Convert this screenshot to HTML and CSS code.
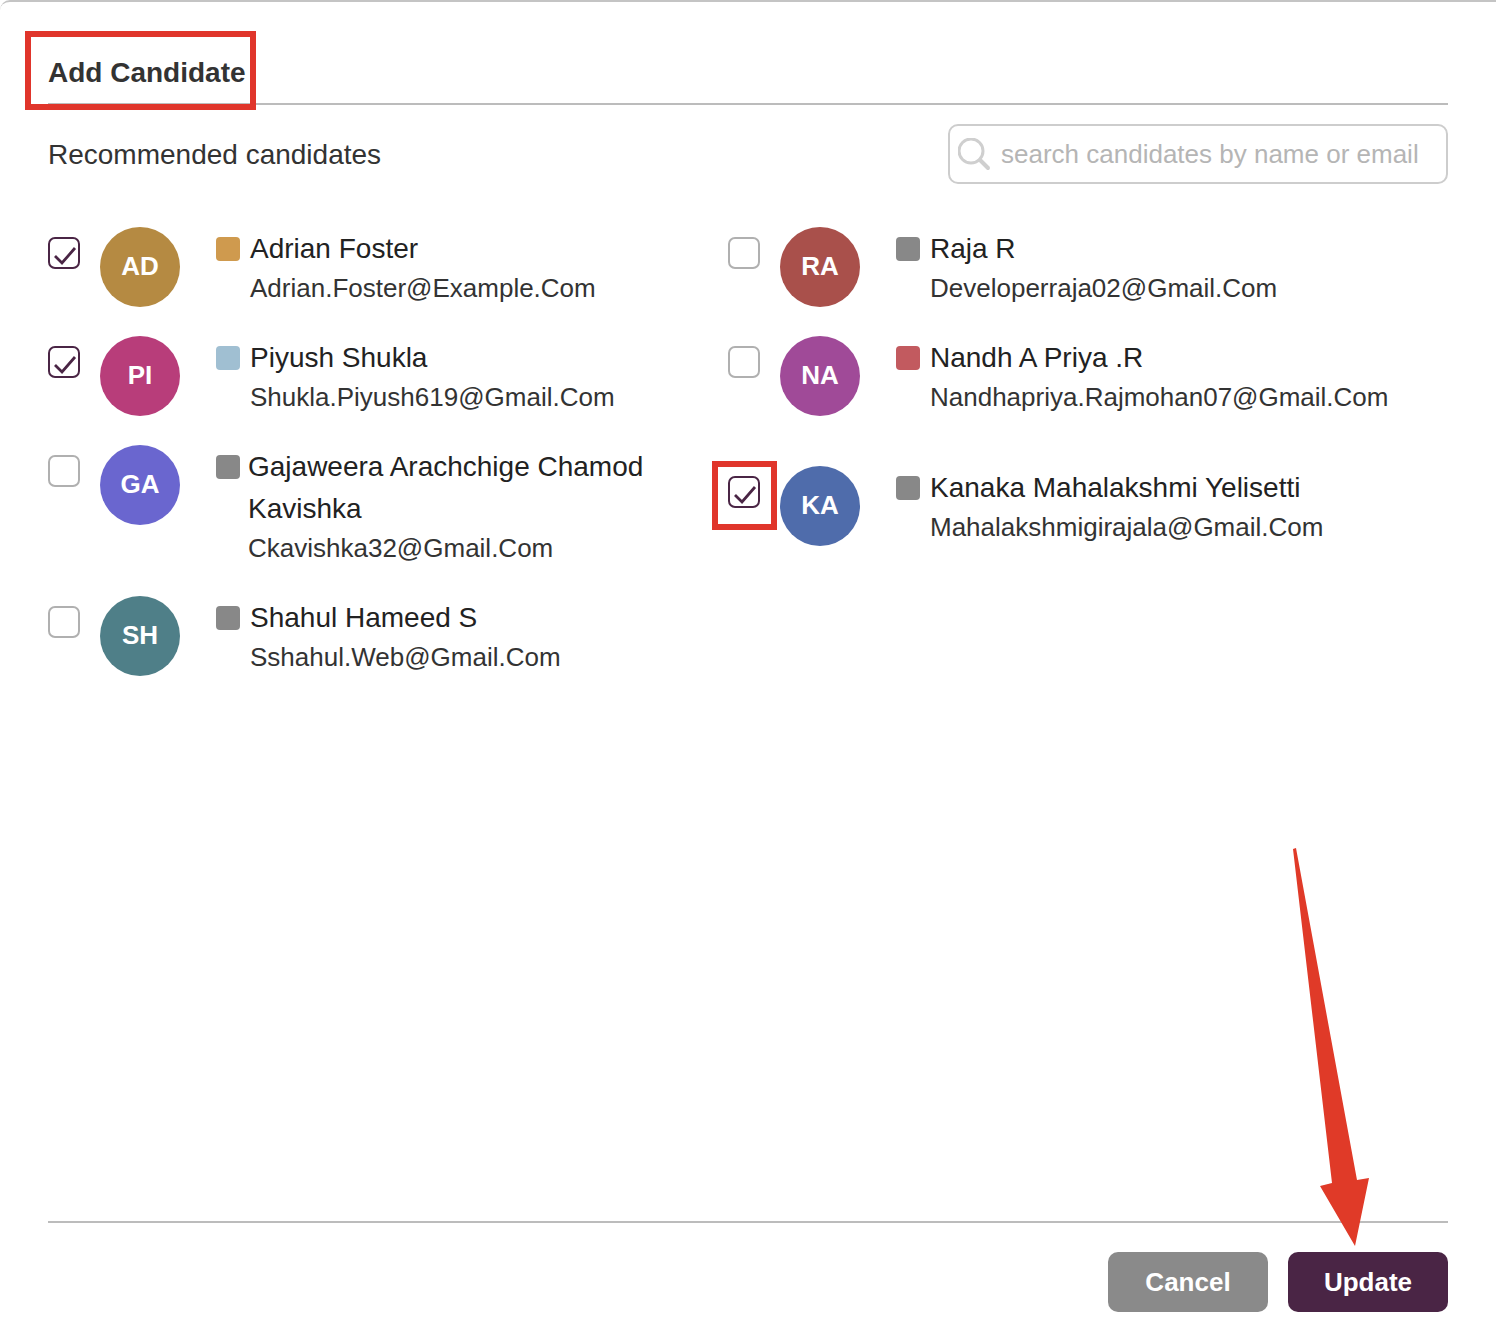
FILE: index.html
```html
<!DOCTYPE html>
<html lang="en">
<head>
<meta charset="utf-8">
<title>Add Candidate</title>
<link rel="stylesheet" href="styles.css">
</head>
<body>
<div class="modal">
  <header class="modal-head"><h1 class="title">Add Candidate</h1></header>
  <div class="toolbar">
    <h2 class="subtitle">Recommended candidates</h2>
    <div class="search">
      <svg class="search-icon" width="34" height="34" viewBox="0 0 34 34"><circle cx="13" cy="13" r="12" fill="none" stroke="#cfcfcf" stroke-width="3"/><path d="M22 22l8 8" stroke="#cfcfcf" stroke-width="4" stroke-linecap="round"/></svg>
      <span class="placeholder">search candidates by name or email</span>
    </div>
  </div>
  <div class="candidates">
    <div class="cand">
      <span class="check on"><svg width="28" height="28" viewBox="0 0 28 28"><path d="M5 17l7 7L25 9" class="tick"/></svg></span>
      <span class="avatar c-ad">AD</span><span class="dot d-ad"></span>
      <div class="info"><div class="name">Adrian Foster</div><div class="email">Adrian.Foster@Example.Com</div></div>
    </div>
    <div class="cand">
      <span class="check"></span>
      <span class="avatar c-ra">RA</span><span class="dot"></span>
      <div class="info"><div class="name">Raja R</div><div class="email">Developerraja02@Gmail.Com</div></div>
    </div>
    <div class="cand">
      <span class="check on"><svg width="28" height="28" viewBox="0 0 28 28"><path d="M5 17l7 7L25 9" class="tick"/></svg></span>
      <span class="avatar c-pi">PI</span><span class="dot d-pi"></span>
      <div class="info"><div class="name">Piyush Shukla</div><div class="email">Shukla.Piyush619@Gmail.Com</div></div>
    </div>
    <div class="cand">
      <span class="check"></span>
      <span class="avatar c-na">NA</span><span class="dot d-na"></span>
      <div class="info"><div class="name">Nandh A Priya .R</div><div class="email">Nandhapriya.Rajmohan07@Gmail.Com</div></div>
    </div>
    <div class="cand">
      <span class="check"></span>
      <span class="avatar c-ga">GA</span><span class="dot"></span>
      <div class="info tight"><div class="name wrap">Gajaweera Arachchige Chamod Kavishka</div><div class="email">Ckavishka32@Gmail.Com</div></div>
    </div>
    <div class="cand">
      <span class="check on"><svg width="28" height="28" viewBox="0 0 28 28"><path d="M5 17l7 7L25 9" class="tick"/></svg></span>
      <span class="avatar c-ka">KA</span><span class="dot"></span>
      <div class="info"><div class="name">Kanaka Mahalakshmi Yelisetti</div><div class="email">Mahalakshmigirajala@Gmail.Com</div></div>
    </div>
    <div class="cand">
      <span class="check"></span>
      <span class="avatar c-sh">SH</span><span class="dot"></span>
      <div class="info"><div class="name">Shahul Hameed S</div><div class="email">Sshahul.Web@Gmail.Com</div></div>
    </div>
  </div>
  <footer class="modal-foot">
    <button class="btn btn-cancel">Cancel</button>
    <button class="btn btn-update">Update</button>
  </footer>
  <div class="mark mark-title"></div>
  <div class="mark mark-check"></div>
  <svg class="arrow" width="1496" height="1328" viewBox="0 0 1496 1328"><polygon points="1293,849 1296,848 1357,1180 1369,1178 1355,1246 1320,1186 1332,1183" fill="#e03a28"/></svg>
</div>
</body>
</html>
```
FILE: styles.css
```css
* { box-sizing: border-box; }
html, body { margin: 0; padding: 0; background: #fff; }
body { font-family: "Liberation Sans", Arial, sans-serif; }
.modal {
  position: relative;
  width: 1496px;
  height: 1328px;
  padding: 0 48px 16px;
  border-top: 2px solid #c4c4c4;
  border-radius: 10px 0 0 0;
  display: flex;
  flex-direction: column;
  overflow: hidden;
}
.modal-head {
  height: 103px;
  border-bottom: 2px solid #bcbcbc;
  display: flex;
  align-items: flex-start;
}
.title { margin: 51px 0 0; font-size: 28px; line-height: 40px; font-weight: 700; color: #333; }
.toolbar {
  display: flex;
  justify-content: space-between;
  align-items: center;
  margin-top: 19px;
  height: 60px;
}
.subtitle { margin: 2px 0 0; font-size: 28px; font-weight: 400; color: #333; }
.search {
  width: 500px;
  height: 60px;
  border: 2px solid #cdcdcd;
  border-radius: 10px;
  display: flex;
  align-items: center;
  padding-left: 8px;
  gap: 9px;
}
.search-icon { flex: none; margin-top: 2px; }
.placeholder { font-size: 26px; color: #b5b5b5; }
.candidates {
  margin-top: 43px;
  display: grid;
  grid-template-columns: 680px 680px;
  row-gap: 29px;
  align-items: center;
}
.cand { display: flex; align-items: flex-start; min-height: 80px; }
.check {
  flex: none;
  width: 32px;
  height: 32px;
  margin-top: 10px;
  border: 2px solid #b0b0b0;
  border-radius: 7px;
  display: flex;
  align-items: center;
  justify-content: center;
}
.check.on { border-color: #4a2545; }
.tick { fill: none; stroke: #4a2545; stroke-width: 2.8; }
.avatar {
  flex: none;
  width: 80px;
  height: 80px;
  margin-left: 20px;
  padding-bottom: 2px;
  border-radius: 50%;
  color: #fff;
  font-size: 26px;
  font-weight: 700;
  display: flex;
  align-items: center;
  justify-content: center;
}
.c-ad { background: #b58a42; }
.c-pi { background: #b83d7a; }
.c-ga { background: #6a66cf; }
.c-sh { background: #4f7f88; }
.c-ra { background: #a9504b; }
.c-na { background: #a04a98; }
.c-ka { background: #4f6cab; }
.dot {
  flex: none;
  width: 24px;
  height: 24px;
  margin: 10px 0 0 36px;
  border-radius: 4px;
  background: #888;
}
.d-ad { background: #cf9a4e; }
.d-pi { background: #a0bfd2; }
.d-na { background: #c25a5f; }
.info { margin: 1px 0 0 10px; }
.info.tight { margin-left: 8px; }
.name { font-size: 28px; line-height: 42px; color: #222; }
.name.wrap { max-width: 410px; }
.email { margin-top: -1px; font-size: 26px; line-height: 38px; color: #333; }
.modal-foot {
  margin-top: auto;
  border-top: 2px solid #bcbcbc;
  padding-top: 29px;
  display: flex;
  justify-content: flex-end;
  gap: 20px;
}
.btn {
  width: 160px;
  height: 60px;
  padding: 0;
  border: 0;
  border-radius: 10px;
  color: #fff;
  font-family: inherit;
  font-size: 26px;
  font-weight: 700;
}
.btn-cancel { background: #8a8a8a; }
.btn-update { background: #4a2545; }
.mark { position: absolute; border: 6px solid #e0352b; }
.mark-title { left: 25px; top: 29px; width: 231px; height: 79px; }
.mark-check { left: 712px; top: 459px; width: 65px; height: 69px; }
.arrow { position: absolute; left: 0; top: -2px; pointer-events: none; }
```
